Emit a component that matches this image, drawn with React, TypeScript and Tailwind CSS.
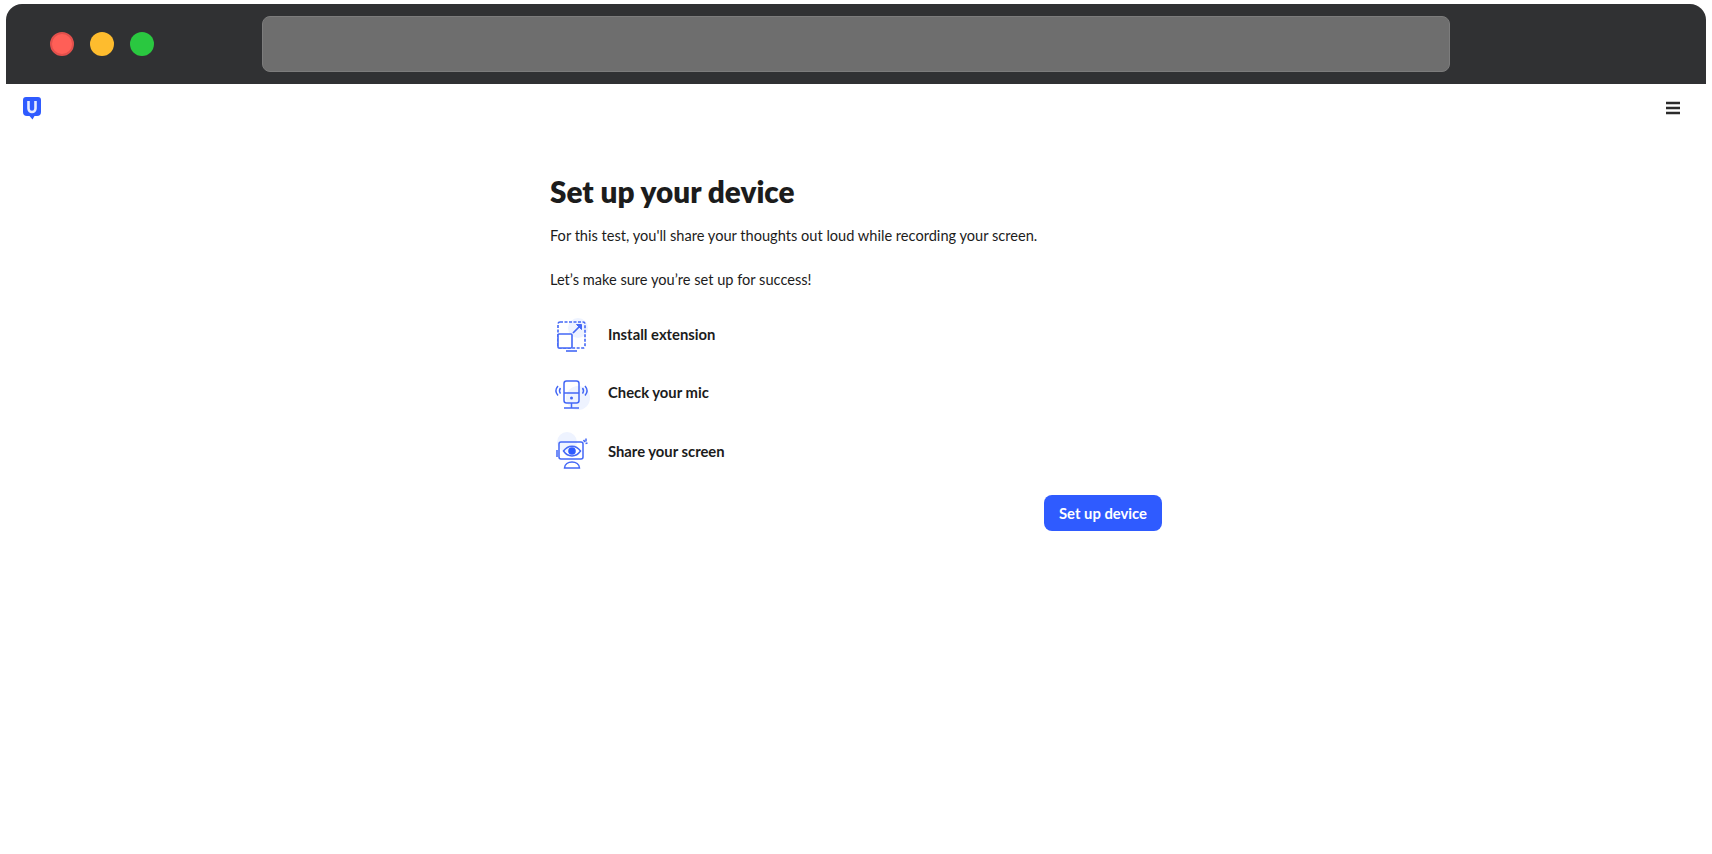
function Logo() {
  return (
    <svg width="20" height="24" viewBox="0 0 20 24" className="block">
      <path d="M4 1h12a3 3 0 0 1 3 3v12a4 4 0 0 1-4 4h-2.500l-2 3.500-3-3.500H5a4 4 0 0 1-4-4V4a3 3 0 0 1 3-3z" fill="#2f5bff" />
      <path d="M6.500 5v7.500a3.500 3.500 0 0 0 7 0V5" fill="none" stroke="#e6ecff" strokeWidth="2.600" />
    </svg>
  );
}

function ExtensionIcon() {
  return (
    <svg width="40" height="40" viewBox="0 0 40 40" fill="none" stroke="#4468f6" strokeWidth="1.600">
      <circle cx="26" cy="14" r="10" fill="#eef3ff" stroke="none" />
      <rect x="6" y="8" width="27" height="26" rx="2" strokeDasharray="3 1.500" />
      <rect x="6" y="20" width="14" height="14" rx="1" fill="#fff" />
      <path d="M21 19l7.500-7.500" strokeWidth="1.700" />
      <path d="M24.500 10.500h5v5z" fill="#4468f6" strokeWidth="1" />
      <path d="M14 37h11" />
    </svg>
  );
}

function MicIcon() {
  return (
    <svg width="40" height="40" viewBox="0 0 40 40" fill="none" stroke="#4468f6" strokeWidth="1.500">
      <circle cx="26" cy="25" r="12" fill="#eef3ff" stroke="none" />
      <rect x="12" y="8" width="15" height="22" rx="2.500" />
      <path d="M12 20h15M19.500 30v5M12 35h15" />
      <circle cx="19.500" cy="25" r="1.500" fill="#4468f6" stroke="none" />
      <path d="M6 13c-2.600 3-2.600 6.500 0 9.500M8.500 15c-1.300 1.800-1.300 3.800 0 5.600M33 13c2.600 3 2.600 6.500 0 9.500M30.500 15c1.300 1.800 1.300 3.800 0 5.600" />
    </svg>
  );
}

function ScreenIcon() {
  return (
    <svg width="40" height="40" viewBox="0 0 40 40" fill="none" stroke="#4468f6" strokeWidth="1.500">
      <circle cx="15" cy="11" r="10" fill="#eef3ff" stroke="none" />
      <rect x="7" y="11" width="24" height="17" rx="2" />
      <path d="M11.500 20c4.500-6.500 12.500-6.500 17 0-4.500 6.500-12.500 6.500-17 0z" />
      <circle cx="20" cy="20" r="3.800" fill="#2f5bff" stroke="none" />
      <path d="M12.500 37c0-8 15-8 15 0zM5 19v7M31.500 9l1.500 2M34 7.500v3M35.500 12l-2 .5" />
    </svg>
  );
}

const steps = [
  { label: "Install extension", icon: <ExtensionIcon /> },
  { label: "Check your mic", icon: <MicIcon /> },
  { label: "Share your screen", icon: <ScreenIcon /> },
];

export default function App() {
  return (
    <div className="min-h-[854px] bg-white pt-1 font-['Lato',sans-serif] text-[#1c1c1c]">
      {/* Browser chrome */}
      <div className="mx-[6px] flex h-20 items-center rounded-t-[16px] bg-[#303133] pl-[44px]">
        <div className="flex gap-4">
          <div className="h-6 w-6 rounded-full border-2 border-[#e2504c] bg-[#ff5f57]" />
          <div className="h-6 w-6 rounded-full bg-[#febc2e]" />
          <div className="h-6 w-6 rounded-full bg-[#2ac840]" />
        </div>
        <div className="ml-[108px] h-14 w-[1188px] rounded-lg border border-[#7c7c7c] bg-[#6e6e6e]" />
      </div>

      {/* Top nav */}
      <div className="flex items-center justify-between pl-[22px] pr-8 pt-[12px]">
        <Logo />
        <svg width="14" height="14" viewBox="0 0 14 14" className="block" stroke="#2b2b2b" strokeWidth="2.400">
          <path d="M0 2h14M0 7h14M0 12h14" />
        </svg>
      </div>

      <main className="mx-auto w-[612px] pt-[54px]">
        <h1 className="text-[29.700px] font-extrabold leading-9">Set up your device</h1>
        <p className="mt-[13px] text-[14.600px] leading-[26px]">
          For this test, you'll share your thoughts out loud while recording your screen.
        </p>
        <p className="mt-[18px] text-[14.600px] leading-[26px]">Let’s make sure you’re set up for success!</p>

        <div className="mt-[21px] flex flex-col gap-[18.500px]">
          {steps.map((step) => (
            <div key={step.label} className="flex items-center gap-4 pl-[2px]">
              {step.icon}
              <span className="text-[14.800px] font-bold">{step.label}</span>
            </div>
          ))}
        </div>

        <div className="mt-[24px] flex justify-end">
          <button className="h-[36px] w-[118px] rounded-lg bg-[#2f5bff] text-[14.800px] font-bold text-white">
            Set up device
          </button>
        </div>
      </main>
    </div>
  );
}
